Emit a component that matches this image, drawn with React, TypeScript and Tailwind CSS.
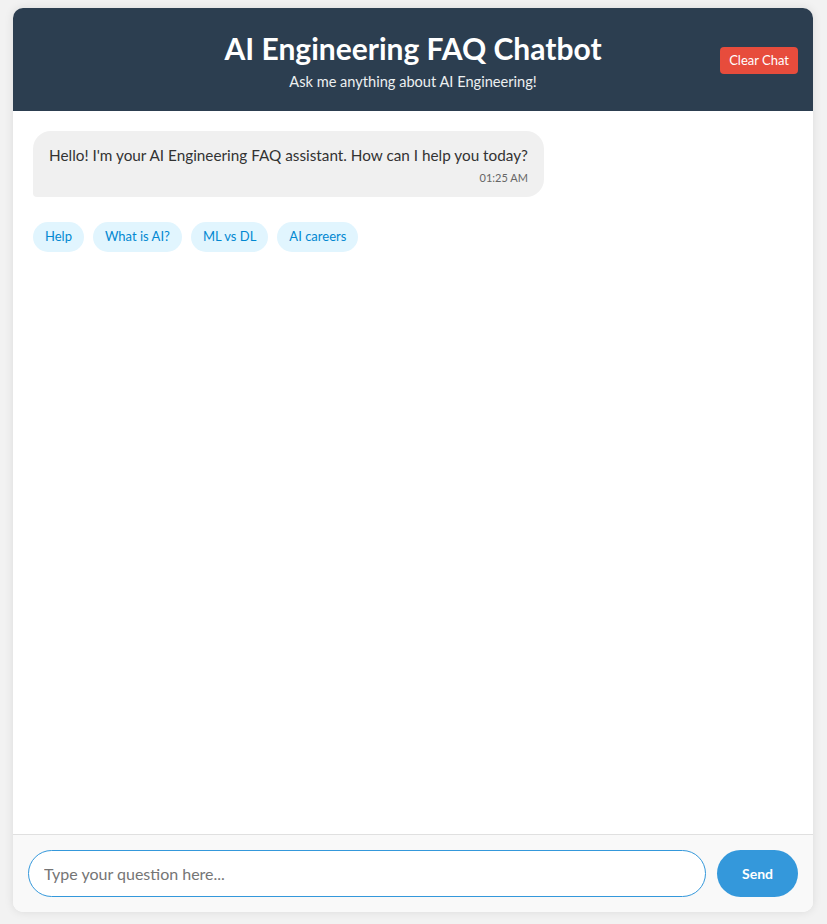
import React from "react";

export default function App() {
  const chips = ["Help", "What is AI?", "ML vs DL", "AI careers"];
  return (
    <div
      className="min-h-[924px] w-full bg-[#f2f2f2] pt-2"
      style={{ fontFamily: "Lato, 'Open Sans', sans-serif" }}
    >
      <div className="ml-[13px] flex h-[904px] w-[800px] flex-col overflow-hidden rounded-[10px] bg-white shadow-[0_0_10px_rgba(0,0,0,0.1)]">
        <div className="relative flex h-[103px] shrink-0 flex-col items-center bg-[#2c3e50] pt-[21px] text-white">
          <h1 className="text-[30px] font-bold leading-[38px]">AI Engineering FAQ Chatbot</h1>
          <p className="mt-[6px] text-[14.6px] leading-[18px] text-[#ecf0f1]">Ask me anything about AI Engineering!</p>
          <button className="absolute right-[15px] top-[39px] h-[27px] rounded-[4px] bg-[#e74c3c] px-[9px] text-[13px] text-white">
            Clear Chat
          </button>
        </div>
        <div className="flex flex-1 flex-col items-start p-5">
          <div className="rounded-[18px] rounded-bl-[4px] bg-[#f0f0f0] px-4 pb-[12px] pt-[12px] text-[#333]">
            <div className="text-[15.3px] leading-[24px]">
              Hello! I'm your AI Engineering FAQ assistant. How can I help you today?
            </div>
            <div className="mt-[4px] text-right text-[11px] leading-[14px] text-[#666]">01:25 AM</div>
          </div>
          <div className="mt-[25px] flex gap-[9px]">
            {chips.map((c) => (
              <button
                key={c}
                className="h-[30px] rounded-[15px] bg-[#e1f5fe] px-3 text-[13px] text-[#0288d1]"
              >
                {c}
              </button>
            ))}
          </div>
        </div>
        <div className="flex shrink-0 items-center gap-[11px] border-t border-[#e0e0e0] bg-[#f9f9f9] px-[15px] pb-[15px] pt-[15px]">
          <input
            className="h-[47px] flex-1 rounded-[24px] border border-[#3498db] bg-white px-[15px] text-[16px] text-[#333] outline-none placeholder:text-[#757575]"
            placeholder="Type your question here..."
          />
          <button className="h-[47px] w-[81px] rounded-full bg-[#3498db] text-[14px] font-bold text-white">
            Send
          </button>
        </div>
      </div>
    </div>
  );
}
